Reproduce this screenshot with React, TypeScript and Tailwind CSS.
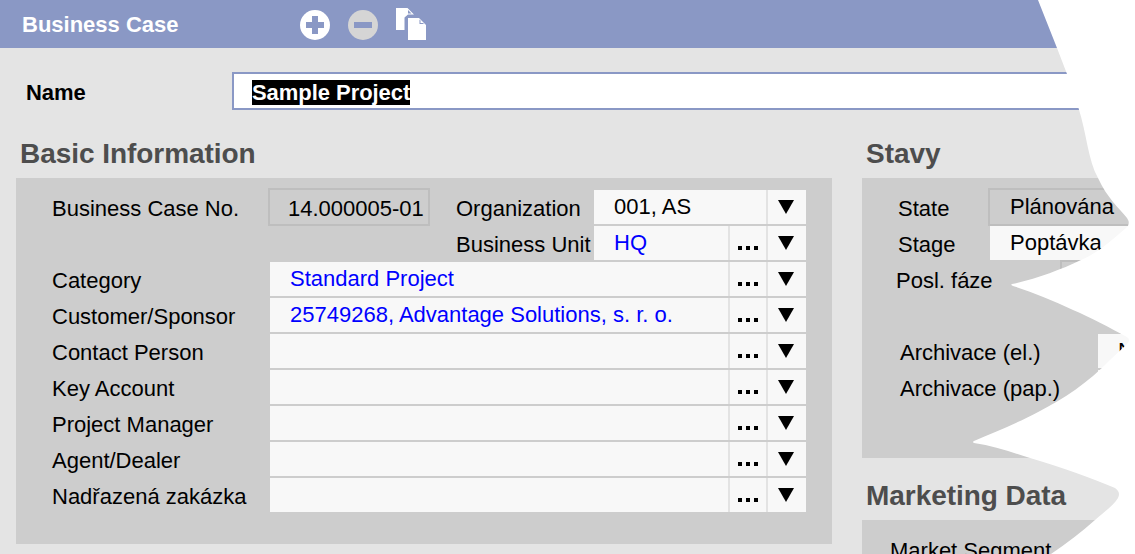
import type { ReactNode } from "react";

function Ellipsis() {
  return (
    <span className="mt-[5px] flex gap-1">
      <i className="size-1 bg-black" />
      <i className="size-1 bg-black" />
      <i className="size-1 bg-black" />
    </span>
  );
}

function Field({ value, link, lookup = true }: { value?: string; link?: boolean; lookup?: boolean }) {
  return (
    <div className="flex h-[34px] min-w-0 flex-1 gap-[2px] bg-[#e3e3e3]">
      <div className={"flex-1 bg-[#f8f8f8] pl-5 leading-[33px] " + (link ? "text-[#0000ff]" : "text-black")}>{value}</div>
      {lookup && (
        <button className="flex w-9 items-center justify-center bg-[#f8f8f8] pt-[5px]" aria-label="Lookup">
          <Ellipsis />
        </button>
      )}
      <button className="flex w-[38px] justify-center bg-[#f8f8f8] pt-[10px]" aria-label="Open list">
        <svg width="16" height="14" viewBox="0 0 16 14" className="-ml-[2px]">
          <path d="M0 0H16L8 14Z" fill="#000" />
        </svg>
      </button>
    </div>
  );
}

function Label({ children, className }: { children: ReactNode; className: string }) {
  return <label className={"h-[34px] shrink-0 leading-[37px] " + className}>{children}</label>;
}

function Heading({ children }: { children: ReactNode }) {
  return <h2 className="h-8 text-[28px] leading-[34px] font-bold tracking-[-0.05px] text-[#4d4d4d]">{children}</h2>;
}

const rows = [
  { label: "Category", value: "Standard Project" },
  { label: "Customer/Sponsor", value: "25749268, Advantage Solutions, s. r. o." },
  { label: "Contact Person" },
  { label: "Key Account" },
  { label: "Project Manager" },
  { label: "Agent/Dealer" },
  { label: "Nadřazená zakázka" },
];

export default function App() {
  return (
    <div className="relative flex h-[554px] w-[1135px] flex-col overflow-hidden bg-[#e4e4e4] font-['Liberation_Sans',Arial,sans-serif] text-[22px] whitespace-nowrap text-black">
      <header className="flex h-12 shrink-0 items-start bg-[#8a98c5] pl-[22px]">
        <h1 className="w-[278px] text-[22px] leading-[49px] font-bold text-white">Business Case</h1>
        <svg width="128" height="48" viewBox="0 0 128 48">
          <circle cx="15" cy="25" r="15" fill="#fff" />
          <path d="M12 16h6v6h6v6h-6v6h-6v-6H6v-6h6z" fill="#8a98c5" />
          <circle cx="63" cy="25" r="15" fill="#d5d5d5" />
          <path d="M54 22h18v6H54z" fill="#8a98c5" />
          <path d="M96 8h11.500l6.500 6.500h-6l-3.500 3v12.500h-8.500z" fill="#fff" />
          <path d="M108 10v3.500h3.500z" fill="#8a98c5" />
          <path d="M108 18h11l7 7v15h-18z" fill="#fff" />
          <path d="M119.500 19.500v4.500h4.500l-1-1h-2.500v-2.500z" fill="#8a98c5" />
        </svg>
      </header>

      <div className="mt-6 flex h-[38px] shrink-0 pl-[26px] font-bold">
        <label className="w-[206px] leading-[41px] tracking-[-0.1px]">Name</label>
        <div className="flex flex-1 items-start border-2 border-[#8a98c5] bg-white pt-[6px] pl-[18px]">
          <span className="h-[25px] bg-black leading-[25px] tracking-[-0.05px] text-white">Sample Project</span>
        </div>
      </div>

      <main className="mt-[27px] flex gap-[30px] pl-4">
        <section className="w-[816px] shrink-0">
          <div className="pl-1">
            <Heading>Basic Information</Heading>
          </div>
          <div className="mt-[9px] flex h-[366px] flex-col gap-[2px] bg-[#cdcdcd] pt-3 pr-[26px] pl-9">
            <div className="flex">
              <Label className="w-[216px]">Business Case No.</Label>
              <div className="-mt-[2px] h-[38px] w-[162px] border-2 border-[#bebebe] pl-[18px] leading-[37px]">14.000005-01</div>
              <div className="ml-[26px] flex flex-1 flex-col gap-[2px]">
                <div className="flex">
                  <Label className="w-[138px]">Organization</Label>
                  <Field value="001, AS" lookup={false} />
                </div>
                <div className="flex">
                  <Label className="w-[138px]">Business Unit</Label>
                  <Field value="HQ" link />
                </div>
              </div>
            </div>
            {rows.map((row) => (
              <div key={row.label} className="flex">
                <Label className="w-[218px]">{row.label}</Label>
                <Field value={row.value} link />
              </div>
            ))}
          </div>
        </section>

        <section className="w-[273px] shrink-0">
          <div className="pl-1">
            <Heading>Stavy</Heading>
          </div>
          <div className="mt-[9px] flex h-[280px] flex-col gap-[2px] bg-[#cdcdcd] pt-3 pl-9">
            <div className="flex h-[34px]">
              <Label className="w-[90px]">State</Label>
              <div className="-mt-[2px] h-[38px] flex-1 border-2 border-[#bebebe] pl-5 leading-[33px]">Plánována</div>
            </div>
            <div className="flex">
              <Label className="w-[92px]">Stage</Label>
              <div className="h-[34px] flex-1 bg-[#f8f8f8] pl-5 leading-[33px]">Poptávka</div>
            </div>
            <div className="flex h-[34px]">
              <Label className="-ml-[2px] w-[164px]">Posl. fáze</Label>
              <div className="-mt-[2px] h-[38px] flex-1 border-2 border-[#bebebe]" />
            </div>
            <div className="h-[34px]" />
            <div className="flex pl-[2px]">
              <Label className="w-[198px]">Archivace (el.)</Label>
              <div className="h-[34px] flex-1 bg-[#f8f8f8] pl-5 leading-[33px]">N</div>
            </div>
            <div className="flex pl-[2px]">
              <Label className="w-[198px]">Archivace (pap.)</Label>
              <div className="h-[34px] flex-1 bg-[#f8f8f8]" />
            </div>
          </div>
          <div className="mt-[21px] pl-1">
            <Heading>Marketing Data</Heading>
          </div>
          <div className="mt-[9px] h-[34px] bg-[#cdcdcd] pt-3 pl-7">
            <Label className="block">Market Segment</Label>
          </div>
        </section>
      </main>

      {/* Torn right edge of the sheet */}
      <svg className="absolute top-0 right-0" width="175" height="554" viewBox="960 0 175 554">
        <path
          fill="#fff"
          d="M1038 0L1057 48L1067 74V108H1078.500C1087 135 1088 160 1098 178C1107 198 1120 209 1127 218Q1131 224 1126 228C1112 240 1098 253 1081 260C1060 270 1036 279 1012 284Q1010 285 1013 286C1032 292 1052 300 1073 310C1090 317 1110 328 1127 337Q1131 340 1127 344L1110 360C1088 383 1063 399 1040 411C1016 424 994 432 974 441Q972 442 974 443C994 446 1011 452 1030 458C1064 468 1091 478 1115 488Q1121 492 1118 498C1112 507 1104 512 1095 520Q1076 537 1051 554H1135V0Z"
        />
      </svg>
    </div>
  );
}
